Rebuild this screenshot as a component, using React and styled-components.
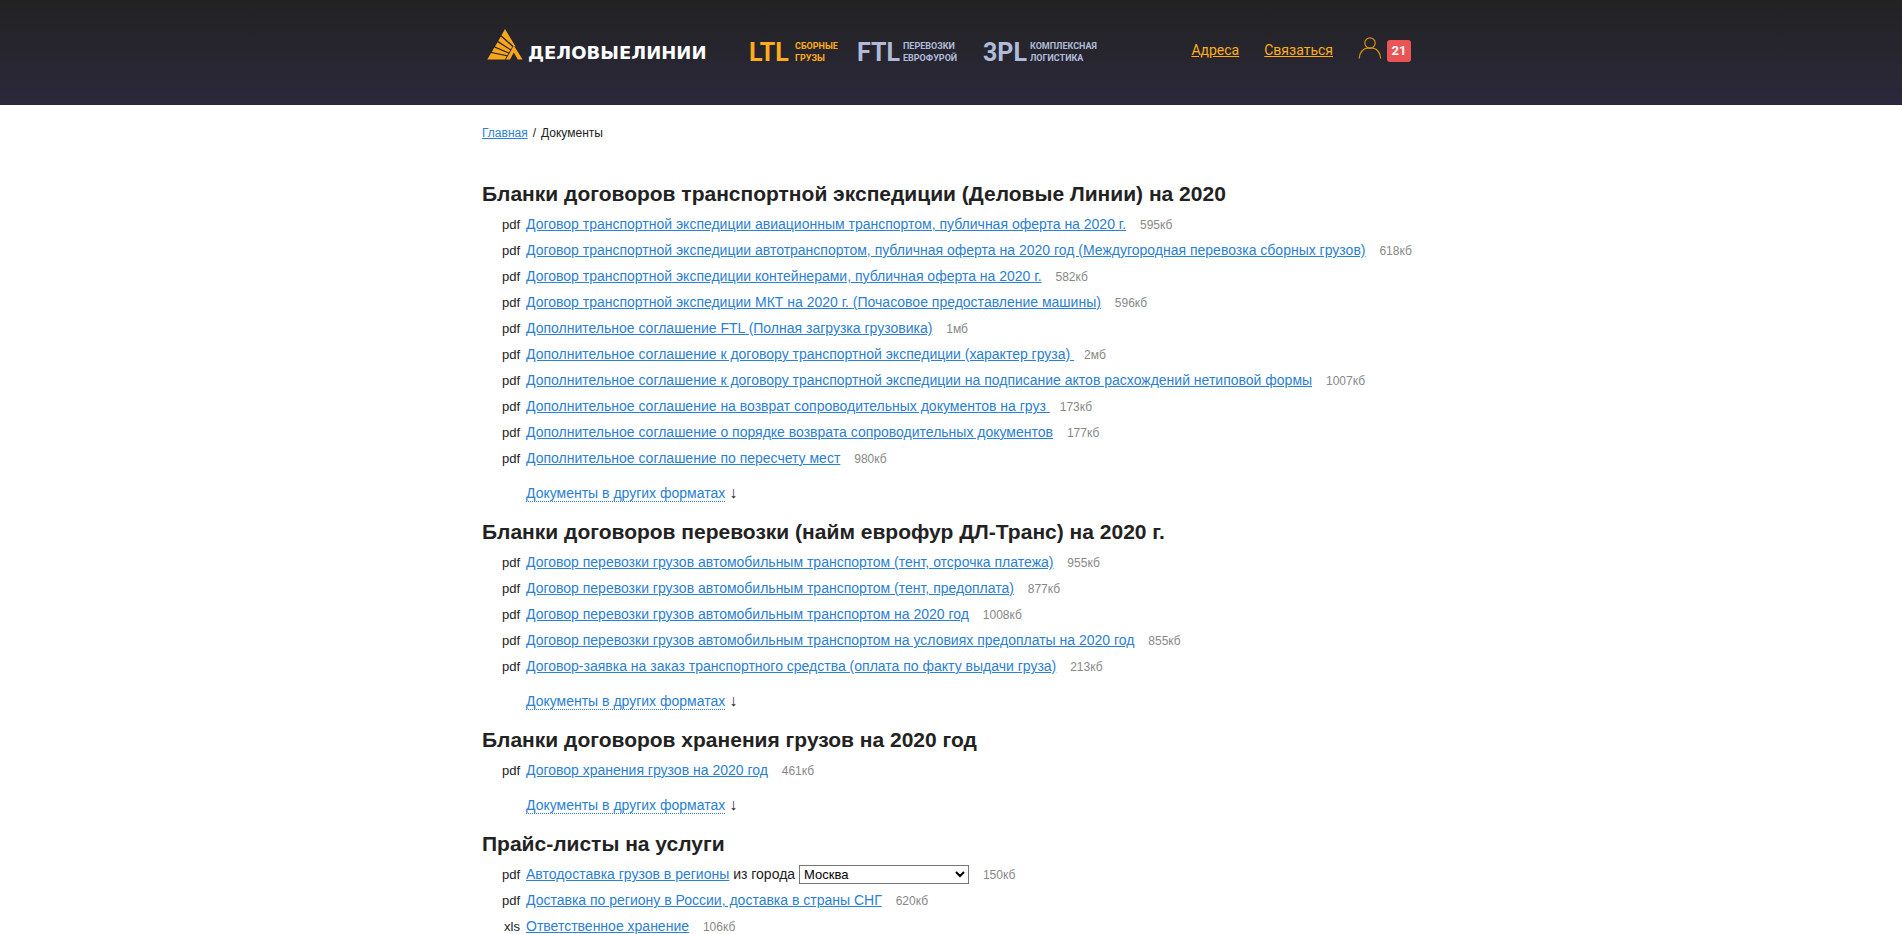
import React, { useState } from 'react'
import styled, { createGlobalStyle } from 'styled-components'

const services = [
    { code: 'LTL', lines: ['Сборные', 'грузы'], active: true },
    { code: 'FTL', lines: ['Перевозки', 'еврофурой'] },
    { code: '3PL', lines: ['Комплексная', 'логистика'] },
]

const contracts = [
    {
        title: 'Бланки договоров транспортной экспедиции (Деловые Линии) на 2020',
        docs: [
            ['Договор транспортной экспедиции авиационным транспортом, публичная оферта на 2020 г.', '595кб'],
            ['Договор транспортной экспедиции автотранспортом, публичная оферта на 2020 год (Междугородная перевозка сборных грузов)', '618кб'],
            ['Договор транспортной экспедиции контейнерами, публичная оферта на 2020 г.', '582кб'],
            ['Договор транспортной экспедиции МКТ на 2020 г. (Почасовое предоставление машины)', '596кб'],
            ['Дополнительное соглашение FTL (Полная загрузка грузовика)', '1мб'],
            ['Дополнительное соглашение к договору транспортной экспедиции (характер груза) ', '2мб'],
            ['Дополнительное соглашение к договору транспортной экспедиции на подписание актов расхождений нетиповой формы', '1007кб'],
            ['Дополнительное соглашение на возврат сопроводительных документов на груз ', '173кб'],
            ['Дополнительное соглашение о порядке возврата сопроводительных документов', '177кб'],
            ['Дополнительное соглашение по пересчету мест', '980кб'],
        ],
    },
    {
        title: 'Бланки договоров перевозки (найм еврофур ДЛ-Транс) на 2020 г.',
        docs: [
            ['Договор перевозки грузов автомобильным транспортом (тент, отсрочка платежа)', '955кб'],
            ['Договор перевозки грузов автомобильным транспортом (тент, предоплата)', '877кб'],
            ['Договор перевозки грузов автомобильным транспортом на 2020 год', '1008кб'],
            ['Договор перевозки грузов автомобильным транспортом на условиях предоплаты на 2020 год', '855кб'],
            ['Договор-заявка на заказ транспортного средства (оплата по факту выдачи груза)', '213кб'],
        ],
    },
    {
        title: 'Бланки договоров хранения грузов на 2020 год',
        docs: [
            ['Договор хранения грузов на 2020 год', '461кб'],
        ],
    },
]

function LogoMark() {
    return (
        <svg width="36" height="32" viewBox="0 0 36 32" aria-hidden="true">
            <path fill="#faa61a" d="M18 0 L28.5 17.5 L26.5 17 L14.5 6.3 Z" />
            <path fill="#faa61a" d="M13.8 7.6 L25.3 17.8 L23.8 20.2 L11.2 12 Z" />
            <path fill="#faa61a" d="M10.5 13.2 L23.2 21.2 L21.9 23.4 L8 17.4 Z" />
            <path fill="#faa61a" d="M7.3 18.6 L21.3 24.4 L20.2 26.3 L4.8 22.9 Z" />
            <path fill="#faa61a" d="M4.1 24.1 L19.6 27.3 L18 30.6 L0.3 30.6 Z" />
            <path fill="#faa61a" d="M26.8 16.6 L35.6 30.6 L30.8 30.6 L26.8 23.6 L23 30.6 L18.9 30.6 Z" />
        </svg>
    )
}

function Document({ type = 'pdf', name, size, children }) {
    return (
        <Doc_Row>
            <Doc_Type>{type}</Doc_Type>
            <Doc_Link href="#">{name}</Doc_Link>
            {children}{' '}
            <Doc_Size>{size}</Doc_Size>
        </Doc_Row>
    )
}

function App() {

    const [city, setCity] = useState('Москва')

    const city_Change = (event) => {
        setCity(event.target.value)
    }

    return (
        <>
            <GlobalStyle />
            <Header>
                <Header_Inner>
                    <Logo href="#">
                        <LogoMark />
                        <Logo_Name>ДЕЛОВЫЕЛИНИИ</Logo_Name>
                    </Logo>
                    <Service_Nav>
                        {services.map((item) => (
                            <Service key={item.code} href="#" $active={item.active}>
                                <Service_Code>{item.code}</Service_Code>
                                <Service_Text>
                                    {item.lines[0]}<br />{item.lines[1]}
                                </Service_Text>
                            </Service>
                        ))}
                    </Service_Nav>
                    <User_Nav>
                        <Header_Link href="#">Адреса</Header_Link>
                        <Header_Link href="#">Связаться</Header_Link>
                        <Profile href="#" aria-label="21">
                            <svg width="24" height="22" viewBox="0 0 24 22" fill="none" stroke="#d4940f" strokeWidth="1.2">
                                <circle cx="12" cy="6" r="5.2" />
                                <path d="M1.2 21.5 C1.2 15.5 5.5 11.6 9 11.2 H15 C18.5 11.6 22.6 15.5 22.6 21.5" />
                            </svg>
                            <Badge>21</Badge>
                        </Profile>
                    </User_Nav>
                </Header_Inner>
            </Header>
            <Content>
                <Breadcrumbs>
                    <Doc_Link href="#">Главная</Doc_Link>
                    <span>/</span>
                    <span>Документы</span>
                </Breadcrumbs>
                {contracts.map((group) => (
                    <Group key={group.title}>
                        <Title>{group.title}</Title>
                        <Doc_List>
                            {group.docs.map(([name, size]) => (
                                <Document key={name} name={name} size={size} />
                            ))}
                        </Doc_List>
                        <More>
                            <More_Button type="button">Документы в других форматах</More_Button>
                            <Arrow>↓</Arrow>
                        </More>
                    </Group>
                ))}
                <Group>
                    <Title>Прайс-листы на услуги</Title>
                    <Doc_List>
                        <Document name="Автодоставка грузов в регионы" size="150кб">
                            {' '}<label htmlFor="city">из города</label>{' '}
                            <City_Select id="city" value={city} onChange={city_Change}>
                                <option>Москва</option>
                            </City_Select>
                        </Document>
                        <Document name="Доставка по региону в России, доставка в страны СНГ" size="620кб" />
                        <Document type="xls" name="Ответственное хранение" size="106кб" />
                    </Doc_List>
                </Group>
            </Content>
        </>
    )
}

export default App


const GlobalStyle = createGlobalStyle`
    body {
        margin: 0;
        background: #fff;
        color: #222;
        font-family: "Liberation Sans", Arial, sans-serif;
        font-size: 14px;
        line-height: 18px;
    }
`

const Header = styled.header`
    background: linear-gradient(#222, #2b293b);
    font-family: Roboto, sans-serif;
`

const Header_Inner = styled.div`
    display: flex;
    align-items: flex-start;
    box-sizing: border-box;
    max-width: 940px;
    height: 105px;
    margin: 0 auto;
    padding: 29px 10px 0 6px;
`

const Logo = styled.a`
    display: flex;
    align-items: flex-end;
    gap: 5px;
    width: 262px;
    color: #fff;
    text-decoration: none;
`

const Logo_Name = styled.span`
    font-family: "DejaVu Sans", sans-serif;
    font-size: 18px;
    font-weight: 700;
    line-height: 16px;
`

const Service_Nav = styled.nav`
    display: grid;
    grid-template-columns: 108px 126px auto;
    padding-top: 11px;
`

const Service = styled.a`
    display: flex;
    gap: 3px;
    color: ${(props) => (props.$active ? '#ffad1a' : '#b0bbd9')};
    text-decoration: none;
`

const Service_Code = styled.span`
    min-width: 43px;
    font-size: 25px;
    font-weight: 700;
    line-height: 26px;
`

const Service_Text = styled.span`
    font-size: 9px;
    font-weight: 700;
    line-height: 12px;
    text-transform: uppercase;
`

const User_Nav = styled.div`
    display: flex;
    gap: 25px;
    margin-left: auto;
    padding-top: 8px;
`

const Header_Link = styled.a`
    color: #ffad1a;
    font-size: 14px;
    line-height: 26px;
    text-decoration: underline;
`

const Profile = styled.a`
    display: flex;
    gap: 5px;
    text-decoration: none;
`

const Badge = styled.span`
    width: 24px;
    height: 22px;
    margin-top: 3px;
    border-radius: 3px;
    background: #eb5454;
    color: #fff;
    font-family: Roboto, sans-serif;
    font-size: 13px;
    font-weight: 700;
    line-height: 22px;
    text-align: center;
`

const Content = styled.main`
    max-width: 938px;
    margin: 0 auto;
    padding-top: 19px;
`

const Breadcrumbs = styled.nav`
    display: flex;
    gap: 5px;
    margin-bottom: 39px;
    font-size: 12px;
`

const Group = styled.section`
    margin-bottom: 16px;
`

const Title = styled.h2`
    margin: 0 0 4px;
    font-size: 21px;
    font-weight: 700;
    line-height: 26px;
`

const Doc_List = styled.ul`
    margin: 0;
    padding: 0;
    list-style: none;
`

const Doc_Row = styled.li`
    box-sizing: border-box;
    min-height: 26px;
    padding: 4px 0;
    line-height: 18px;
`

const Doc_Type = styled.span`
    display: inline-block;
    width: 38px;
    margin-right: 6px;
    font-size: 13px;
    line-height: 16px;
    text-align: right;
`

const Doc_Link = styled.a`
    color: #2a80d2;
    text-decoration: underline;
`

const Doc_Size = styled.span`
    margin-left: 10px;
    color: #888;
    font-size: 12px;
    line-height: 14px;
`

const More = styled.div`
    display: flex;
    gap: 4px;
    padding: 13px 0 1px 44px;
`

const More_Button = styled.button`
    padding: 0;
    border: none;
    border-bottom: 1px dotted #2a80d2;
    background: none;
    color: #2a80d2;
    font: inherit;
    line-height: 16px;
    cursor: pointer;
`

const Arrow = styled.span`
    font-size: 16px;
`

const City_Select = styled.select`
    width: 170px;
    height: 19px;
    margin: -1px 0;
    border: 1px solid #767676;
    background: #fff;
    color: #000;
    font-family: inherit;
    font-size: 13px;
    line-height: 16px;
`
